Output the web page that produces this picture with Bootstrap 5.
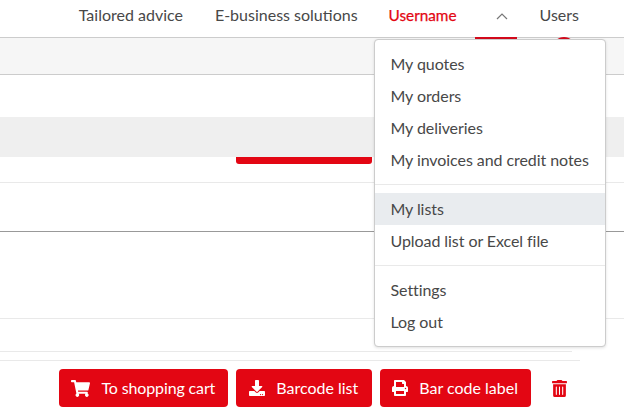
<!DOCTYPE html>
<html lang="en">
<head>
<meta charset="utf-8">
<title>Lists</title>
<link href="https://cdn.jsdelivr.net/npm/bootstrap@5.3.0/dist/css/bootstrap.min.css" rel="stylesheet">
<style>
html,body{height:419px;overflow:hidden}
body{font-family:"Lato","Liberation Sans",sans-serif;font-size:16px;color:#444;background:#fff;position:relative}
.top-nav{height:37px;padding-right:45px;gap:32px}
.top-nav a{color:#484848;text-decoration:none;line-height:24px;margin-top:3px}
.top-nav a.user-link{color:#e30613;font-weight:400;font-size:15.3px;-webkit-text-stroke:.25px #e30613;margin-left:-1px}
.chev-slot{width:42px;margin:0 -10px 0 -13px;height:37px;position:relative}
.chev-slot svg{position:absolute;left:20px;top:13px}
.red-tab{position:absolute;left:475px;top:37px;width:42px;height:3px;background:#d40a1c}
.red-dot{position:absolute;left:553px;top:37px;width:22px;height:22px;border-radius:50%;background:#d40a1c}
.band-a{height:38px;background:#f6f6f6;border-top:1px solid #ccc;border-bottom:1px solid #ccc}
.spacer-a{height:42px}
.band-b{height:40px;background:#efefef}
.red-bar-row{height:26px;border-bottom:1px solid #e9e9e9;padding-left:236px}
.red-bar{width:136px;height:7px;background:#e30613;border-radius:0 0 3px 3px}
.row-dark{height:49px;border-bottom:1px solid #999}
.row-tall{height:87px;border-bottom:1px solid #e9e9e9}
.row-mid{height:33px;border-bottom:1px solid #e9e9e9;width:572px}
.row-thin{height:9px;border-bottom:1px solid #e9e9e9;width:580px}
.action-row{padding:8px 57px 0 0;gap:8px}
.btn-red{background:#e30613;border:0;color:#fff;height:38px;padding:0 13px 0 12px;font-size:16px;border-radius:4px;gap:11px;display:inline-flex;align-items:center}
.btn-red:hover{background:#e30613;color:#fff}
.btn-tight{letter-spacing:-.13px}
.btn-wide{padding:0 14px 0 13px}
.trash-ico{margin-left:13px}
.user-menu{position:absolute;left:374px;top:39px;width:232px;margin:0;padding:8px 0;border:1px solid #ccc;border-radius:4px;box-shadow:0 1px 3px rgba(0,0,0,.12);font-size:16px;display:block;z-index:5;letter-spacing:-.07px}
.user-menu .dropdown-item{padding:4px 16px 4px 15.5px;height:32px;line-height:24px;color:#484848}
.user-menu .dropdown-item.hl{background:#e9ecef}
.user-menu .dropdown-divider{margin:8px 0;border-top-color:#e9e9e9;opacity:1}
</style>
</head>
<body>
<nav class="top-nav d-flex justify-content-end align-items-start">
  <a href="#">Tailored advice</a>
  <a href="#">E-business solutions</a>
  <a href="#" class="user-link">Username</a>
  <span class="chev-slot"><svg width="12" height="7" viewBox="0 0 12 7"><path d="M1 6l5-5 5 5" fill="none" stroke="#777" stroke-width="1.2"/></svg></span>
  <a href="#">Users</a>
</nav>
<span class="red-tab"></span>
<span class="red-dot"></span>
<div class="band-a"></div>
<div class="spacer-a"></div>
<div class="band-b"></div>
<div class="red-bar-row"><div class="red-bar"></div></div>
<div class="row-dark"></div>
<div class="row-tall"></div>
<div class="row-mid"></div>
<div class="row-thin"></div>
<div class="action-row d-flex justify-content-end align-items-center">
  <a href="#" class="btn btn-red btn-tight"><svg width="19" height="17" viewBox="0 0 576 512" fill="#fff"><path d="M528.12 301.319l47.273-208C578.806 78.301 567.391 64 551.99 64H159.208l-9.166-44.81C147.758 8.021 137.93 0 126.529 0H24C10.745 0 0 10.745 0 24v16c0 13.255 10.745 24 24 24h69.883l70.248 343.435C147.325 417.1 136 435.222 136 456c0 30.928 25.072 56 56 56s56-25.072 56-56c0-15.674-6.447-29.835-16.824-40h209.647C430.447 426.165 424 440.326 424 456c0 30.928 25.072 56 56 56s56-25.072 56-56c0-22.172-12.888-41.332-31.579-50.405l5.517-24.276c3.413-15.018-8.002-29.319-23.403-29.319H218.117l-6.545-32h293.145c11.206 0 20.92-7.754 23.403-18.681z"/></svg>To shopping cart</a>
  <a href="#" class="btn btn-red btn-wide"><svg width="16" height="16" viewBox="0 0 512 512" fill="#fff"><path d="M216 0h80c13.3 0 24 10.7 24 24v168h87.7c17.8 0 26.7 21.5 14.1 34.1L269.7 378.3c-7.5 7.5-19.8 7.5-27.3 0L90.1 226.1c-12.6-12.6-3.7-34.1 14.1-34.1H192V24c0-13.3 10.7-24 24-24zm296 376v112c0 13.3-10.7 24-24 24H24c-13.3 0-24-10.7-24-24V376c0-13.3 10.7-24 24-24h146.7l49 49c20.1 20.1 52.5 20.1 72.6 0l49-49H488c13.3 0 24 10.7 24 24zm-124 88c0-11-9-20-20-20s-20 9-20 20 9 20 20 20 20-9 20-20zm64 0c0-11-9-20-20-20s-20 9-20 20 9 20 20 20 20-9 20-20z"/></svg>Barcode list</a>
  <a href="#" class="btn btn-red"><svg width="16" height="16" viewBox="0 0 512 512" fill="#fff"><path d="M448 192V77.25c0-8.49-3.37-16.62-9.37-22.63L393.37 9.37c-6-6-14.14-9.37-22.63-9.37H96C78.33 0 64 14.33 64 32v160c-35.35 0-64 28.65-64 64v112c0 8.84 7.16 16 16 16h48v96c0 17.67 14.33 32 32 32h320c17.67 0 32-14.33 32-32v-96h48c8.84 0 16-7.16 16-16V256c0-35.35-28.65-64-64-64zm-64 256H128v-96h256v96zm0-224H128V64h192v48c0 8.84 7.16 16 16 16h48v96zm48 72c-13.25 0-24-10.75-24-24 0-13.26 10.75-24 24-24s24 10.74 24 24c0 13.25-10.75 24-24 24z"/></svg>Bar code label</a>
  <svg class="trash-ico" width="15" height="17" viewBox="0 0 448 512" fill="#e30613"><path d="M32 464a48 48 0 0 0 48 48h288a48 48 0 0 0 48-48V128H32zm272-256a16 16 0 0 1 32 0v224a16 16 0 0 1-32 0zm-96 0a16 16 0 0 1 32 0v224a16 16 0 0 1-32 0zm-96 0a16 16 0 0 1 32 0v224a16 16 0 0 1-32 0zM432 32H312l-9.4-18.7A24 24 0 0 0 281.1 0H166.8a23.72 23.72 0 0 0-21.4 13.3L136 32H16A16 16 0 0 0 0 48v32a16 16 0 0 0 16 16h416a16 16 0 0 0 16-16V48a16 16 0 0 0-16-16z"/></svg>
</div>
<ul class="dropdown-menu user-menu">
  <li><a class="dropdown-item" href="#">My quotes</a></li>
  <li><a class="dropdown-item" href="#">My orders</a></li>
  <li><a class="dropdown-item" href="#">My deliveries</a></li>
  <li><a class="dropdown-item" href="#">My invoices and credit notes</a></li>
  <li><hr class="dropdown-divider"></li>
  <li><a class="dropdown-item hl" href="#">My lists</a></li>
  <li><a class="dropdown-item" href="#">Upload list or Excel file</a></li>
  <li><hr class="dropdown-divider"></li>
  <li><a class="dropdown-item" href="#">Settings</a></li>
  <li><a class="dropdown-item" href="#">Log out</a></li>
</ul>
<script src="https://cdn.jsdelivr.net/npm/bootstrap@5.3.0/dist/js/bootstrap.bundle.min.js"></script>
</body>
</html>
